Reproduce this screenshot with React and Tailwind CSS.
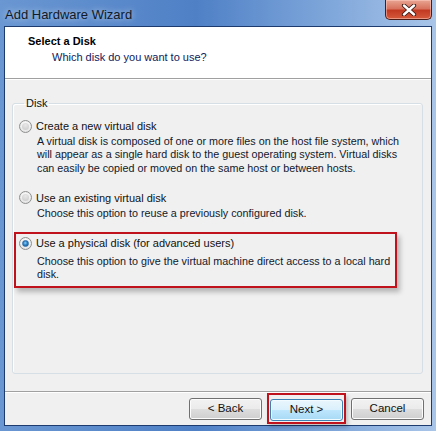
import React from 'react';

const font = { fontFamily: '"Liberation Sans", Arial, sans-serif' };

function Radio({ checked }) {
  return (
    <span className="relative inline-flex h-[13px] w-[13px] shrink-0 items-center justify-center rounded-full border border-[#8e8f8f] bg-[radial-gradient(circle_at_50%_40%,#ffffff_0%,#f4f4f4_40%,#d6d6d6_100%)]">
      {checked ? (
        <span className="h-[7px] w-[7px] rounded-full border border-[#2a6aa8] bg-[radial-gradient(circle_at_45%_40%,#8fd0fb_0%,#2f86c8_45%,#134a80_100%)]" />
      ) : (
        <span className="h-[7px] w-[7px] rounded-full bg-[radial-gradient(circle_at_50%_30%,#e8e8e8,#c8c8c8)]" />
      )}
    </span>
  );
}

function Option({ checked, label }) {
  return (
    <div className="flex h-[16px] items-center gap-[4px] text-[11px] leading-[16px] text-[#111]">
      <Radio checked={checked} />
      <span>{label}</span>
    </div>
  );
}

function Desc({ children, className = '' }) {
  return (
    <div className={`ml-[18px] whitespace-nowrap text-[10.75px] leading-[13.3px] text-[#10182c] ${className}`}>
      {children}
    </div>
  );
}

function WinButton({ children, primary }) {
  return (
    <button
      className={
        primary
          ? 'h-[22px] w-[73px] rounded-[3px] border border-[#3c7fb1] bg-[linear-gradient(#eaf6fd_0%,#d9f0fc_50%,#bee6fd_51%,#a7d9f5_100%)] text-[11.5px] text-[#111] shadow-[inset_0_0_0_1px_#f2fbff]'
          : 'h-[22px] w-[73px] rounded-[3px] border border-[#707070] bg-[linear-gradient(#f2f2f2_0%,#ebebeb_50%,#dddddd_51%,#cfcfcf_100%)] text-[11.5px] text-[#111] shadow-[inset_0_0_0_1px_#fcfcfc]'
      }
    >
      {children}
    </button>
  );
}

export default function App() {
  return (
    <div
      className="flex h-[431px] w-[436px] flex-col bg-[linear-gradient(90deg,#6a97d2_0%,#4f80c6_45%,#7ea6da_75%,#a9c5e8_100%)] px-[4px] pb-[5px]"
      style={font}
    >
      {/* Title bar */}
      <div className="flex h-[26px] items-start justify-between">
        <span className="pl-[1px] pt-[7px] text-[13px] leading-[16px] text-[#0f1a2a] [text-shadow:0_0_6px_rgba(255,255,255,0.7)]">
          Add Hardware Wizard
        </span>
        <div className="flex h-[20px] w-[47px] items-center justify-center rounded-b-[5px] border border-t-0 border-[#4a1c18] bg-[linear-gradient(#e9a593_0%,#d7735e_45%,#c23a22_55%,#d55a3c_100%)] shadow-[inset_0_0_0_1px_rgba(255,210,200,0.5)]">
          <svg width="16" height="12" viewBox="0 0 16 12">
            <path d="M3 1.5 L13 10.5 M13 1.5 L3 10.5" stroke="#3b1712" strokeWidth="4.2" strokeLinecap="round" />
            <path d="M3 1.5 L13 10.5 M13 1.5 L3 10.5" stroke="#ffffff" strokeWidth="2.4" strokeLinecap="round" />
          </svg>
        </div>
      </div>

      {/* Client area */}
      <div className="flex flex-1 flex-col border border-[#1d3b6e] bg-[#f0f0f0]">
        {/* Header */}
        <div className="h-[52px] border-b border-[#a0a0a0] bg-white pl-[23px] pt-[6px] shadow-[0_1px_0_#ffffff]">
          <div className="text-[11px] font-bold leading-[16px] text-black">Select a Disk</div>
          <div className="pl-[24px] text-[11px] leading-[16px] text-[#10205a]">Which disk do you want to use?</div>
        </div>

        {/* Body */}
        <div className="flex-1 pl-[7px] pr-[8px] pt-[16px]">
          <fieldset className="h-[279px] rounded-[3px] border border-[#d5dfe5] pl-[6px] pt-[7px] shadow-[inset_1px_1px_0_#ffffff]">
            <legend className="ml-[5px] px-[2px] text-[11px] leading-[16px] text-[#111]">Disk</legend>

            <Option label="Create a new virtual disk" />
            <Desc className="mt-[1px]">
              A virtual disk is composed of one or more files on the host file system, which
              <br />
              will appear as a single hard disk to the guest operating system. Virtual disks
              <br />
              can easily be copied or moved on the same host or between hosts.
            </Desc>

            <div className="mt-[15px]">
              <Option label="Use an existing virtual disk" />
            </div>
            <Desc className="mt-[1px]">Choose this option to reuse a previously configured disk.</Desc>

            <div className="-ml-[5px] mt-[12px] w-[383px] border-2 border-[#c0121c] pb-[4px] pl-[3px] pt-[1px] shadow-[3px_4px_5px_rgba(0,0,0,0.25)]">
              <Option checked label="Use a physical disk (for advanced users)" />
              <Desc className="mt-[4px]">
                Choose this option to give the virtual machine direct access to a local hard
                <br />
                disk.
              </Desc>
            </div>
          </fieldset>
        </div>

        {/* Footer */}
        <div className="flex h-[34px] items-center justify-end border-t border-[#a0a0a0] pr-[7px] shadow-[inset_0_1px_0_#ffffff]">
          <WinButton>&lt; Back</WinButton>
          <div className="ml-[5px] mr-[5px] border-2 border-[#c0121c] p-[1px] shadow-[2px_3px_4px_rgba(0,0,0,0.2)]">
            <WinButton primary>Next &gt;</WinButton>
          </div>
          <WinButton>Cancel</WinButton>
        </div>
      </div>
    </div>
  );
}
